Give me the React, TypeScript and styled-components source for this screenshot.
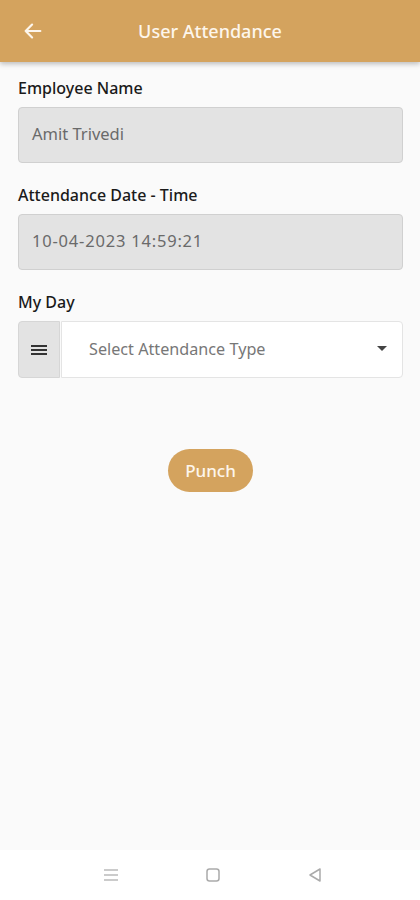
import React from 'react'
import styled, { createGlobalStyle } from 'styled-components'

const GlobalStyle = createGlobalStyle`
    html, body {
        margin: 0;
        padding: 0;
        background: #fafafa;
        font-family: 'Noto Sans', 'Open Sans', sans-serif;
    }
`

const Screen = styled.div`
    display: flex;
    flex-direction: column;
    width: 420px;
    height: 900px;
    background: #fafafa;
    overflow: hidden;
`

const Header = styled.header`
    display: flex;
    align-items: center;
    height: 62px;
    padding: 0 16px;
    background: #d4a35e;
    box-shadow: 0 2px 5px rgba(0, 0, 0, 0.25);
    position: relative;
    z-index: 1;
`

const BackButton = styled.button`
    display: flex;
    align-items: center;
    justify-content: center;
    width: 34px;
    height: 34px;
    padding: 0;
    border: none;
    background: transparent;
`

const Title = styled.h1`
    flex: 1;
    margin: 0 34px 0 0;
    text-align: center;
    color: #fdf6ec;
    font-size: 18px;
    font-weight: 500;
`

const Body = styled.main`
    display: flex;
    flex-direction: column;
    flex: 1;
    padding: 15px 17px 0 18px;
`

const Field = styled.div`
    display: flex;
    flex-direction: column;
    margin-bottom: 21px;
`

const Label = styled.label`
    font-size: 16px;
    font-weight: 500;
    color: #1a1a1a;
    margin-bottom: 8px;
    line-height: 22px;
`

const ReadOnlyBox = styled.div<{ $wide?: boolean }>`
    display: flex;
    align-items: center;
    height: 56px;
    padding: 0 13px 4px;
    box-sizing: border-box;
    background: #e3e3e3;
    border: 1px solid #d0d0d0;
    border-radius: 4px;
    color: #6a6a6a;
    font-size: 16.5px;
    letter-spacing: ${p => (p.$wide ? '0.8px' : '0')};
`

const SelectRow = styled.div`
    display: flex;
    height: 57px;
`

const MenuAddon = styled.div`
    display: flex;
    align-items: center;
    justify-content: center;
    width: 42px;
    background: #e3e3e3;
    border: 1px solid #d6d6d6;
    border-radius: 4px 0 0 4px;
    box-sizing: border-box;
`

const SelectBox = styled.div`
    display: flex;
    flex: 1;
    align-items: center;
    justify-content: space-between;
    padding: 0 14px 2px 27px;
    margin-left: 1px;
    background: #fff;
    border: 1px solid #e4e4e4;
    border-radius: 0 4px 4px 0;
    box-sizing: border-box;
    color: #777;
    font-size: 16.2px;
`

const Actions = styled.div`
    display: flex;
    justify-content: center;
    margin-top: 50px;
`

const PunchButton = styled.button`
    height: 43px;
    padding: 0 17px;
    border: none;
    border-radius: 22px;
    background: #d4a35e;
    color: #fdf6ec;
    font-family: inherit;
    font-size: 17px;
    font-weight: 500;
`

const NavBar = styled.nav`
    display: flex;
    align-items: center;
    justify-content: center;
    gap: 82px;
    height: 50px;
    padding-left: 5px;
    background: #fff;
`

const NavIcon = styled.div`
    display: flex;
    align-items: center;
    justify-content: center;
    width: 20px;
    height: 20px;
`

export default function App() {
    return (
        <Screen>
            <GlobalStyle />
            <Header>
                <BackButton>
                    <svg width="22" height="22" viewBox="0 0 24 24" fill="none" stroke="#fdf6ec" strokeWidth="2.4" strokeLinecap="round" strokeLinejoin="round">
                        <path d="M20 12H4M11 5l-7 7 7 7" />
                    </svg>
                </BackButton>
                <Title>User Attendance</Title>
            </Header>
            <Body>
                <Field>
                    <Label>Employee Name</Label>
                    <ReadOnlyBox>Amit Trivedi</ReadOnlyBox>
                </Field>
                <Field>
                    <Label>Attendance Date - Time</Label>
                    <ReadOnlyBox $wide>10-04-2023 14:59:21</ReadOnlyBox>
                </Field>
                <Field>
                    <Label>My Day</Label>
                    <SelectRow>
                        <MenuAddon>
                            <svg width="16" height="12" viewBox="0 0 16 12" fill="#333">
                                <rect x="0" y="1" width="16" height="2" />
                                <rect x="0" y="5" width="16" height="2" />
                                <rect x="0" y="9" width="16" height="2" />
                            </svg>
                        </MenuAddon>
                        <SelectBox>
                            <span>Select Attendance Type</span>
                            <svg width="12" height="7" viewBox="0 0 12 7" fill="#444">
                                <path d="M1 1h10L6 6z" />
                            </svg>
                        </SelectBox>
                    </SelectRow>
                </Field>
                <Actions>
                    <PunchButton>Punch</PunchButton>
                </Actions>
            </Body>
            <NavBar>
                <NavIcon>
                    <svg width="16" height="16" viewBox="0 0 16 16" stroke="#bbb" strokeWidth="1.5">
                        <path d="M1 3h14M1 8h14M1 13h14" />
                    </svg>
                </NavIcon>
                <NavIcon>
                    <svg width="16" height="16" viewBox="0 0 16 16" fill="none" stroke="#aaa" strokeWidth="1.5">
                        <rect x="2" y="2" width="12" height="12" rx="2.5" />
                    </svg>
                </NavIcon>
                <NavIcon>
                    <svg width="16" height="16" viewBox="0 0 16 16" fill="none" stroke="#aaa" strokeWidth="1.5" strokeLinejoin="round">
                        <path d="M13 2v12L3 8z" />
                    </svg>
                </NavIcon>
            </NavBar>
        </Screen>
    )
}
